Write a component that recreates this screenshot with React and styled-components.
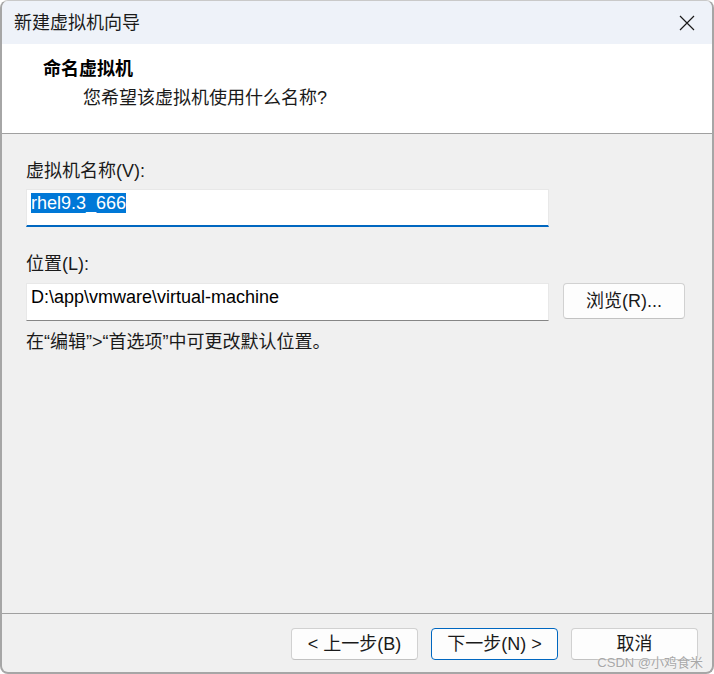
import React from 'react'
import styled, { createGlobalStyle } from 'styled-components'

const GlobalStyle = createGlobalStyle`
  html, body {
    margin: 0;
    padding: 0;
    background: #ffffff;
  }
`

const FONT = `"Liberation Sans", "Noto Sans CJK SC", sans-serif`

const Window = styled.div`
  position: relative;
  width: 714px;
  height: 674px;
  box-sizing: border-box;
  display: flex;
  flex-direction: column;
  border: 2px solid #a6a6a6;
  border-top: 1px solid #c9c9c9;
  border-radius: 8px;
  overflow: hidden;
  background: #f0f0f0;
  font-family: ${FONT};
  font-size: 18px;
  color: #1a1a1a;
`

const TitleBar = styled.div`
  height: 43px;
  flex: none;
  display: flex;
  align-items: center;
  justify-content: space-between;
  padding-left: 12px;
  background: #eef2f9;
`

const Title = styled.span`
  font-size: 18px;
  line-height: 24px;
  color: #1a1a1a;
`

const CloseButton = styled.button`
  width: 50px;
  height: 43px;
  border: none;
  background: transparent;
  display: flex;
  align-items: center;
  justify-content: center;
  padding: 0;
`

const Header = styled.div`
  height: 90px;
  flex: none;
  box-sizing: border-box;
  padding: 13px 0 0 41px;
  background: #ffffff;
  border-bottom: 1px solid #a0a0a0;
`

const Heading = styled.div`
  font-size: 18px;
  line-height: 24px;
  font-weight: 700;
  color: #000;
`

const SubHeading = styled.div`
  margin: 5px 0 0 40px;
  font-size: 18px;
  line-height: 24px;
  color: #1a1a1a;
`

const Body = styled.div`
  flex: 1;
  padding: 26px 0 0 24px;
`

const Label = styled.div`
  font-size: 18px;
  line-height: 22px;
  margin-top: ${({ $gap }) => $gap || 0}px;
  color: #1a1a1a;
`

const FieldRow = styled.div`
  display: flex;
  align-items: flex-start;
  gap: 14px;
  margin-top: ${({ $gap }) => $gap}px;
`

const Input = styled.div`
  width: 523px;
  height: 38px;
  box-sizing: border-box;
  padding: 2px 0 0 4px;
  background: #ffffff;
  border: 1px solid #e8e8e8;
  border-bottom: ${({ $focused }) => ($focused ? '2px solid #0067c0' : '1px solid #868686')};
  font-size: 18px;
  line-height: 22px;
  color: #000;
  white-space: nowrap;
`

const Selected = styled.span`
  background: #0078d7;
  color: #ffffff;
`

const Button = styled.button`
  width: ${({ $w }) => $w}px;
  height: ${({ $h }) => $h}px;
  box-sizing: border-box;
  border: 1px solid ${({ $primary }) => ($primary ? '#0067c0' : '#d1d1d1')};
  border-bottom-color: ${({ $primary }) => ($primary ? '#0067c0' : '#c2c2c2')};
  border-radius: 4px;
  background: #fdfdfd;
  font-family: ${FONT};
  font-size: 18px;
  line-height: 20px;
  color: #1a1a1a;
  padding: 0;
  display: flex;
  align-items: center;
  justify-content: center;
  white-space: pre;
`

const Hint = styled.div`
  margin-top: 10px;
  font-size: 18px;
  line-height: 22px;
  color: #1a1a1a;
`

const Footer = styled.div`
  height: 59px;
  flex: none;
  box-sizing: border-box;
  border-top: 1px solid #a0a0a0;
  padding: 14px 14px 0 0;
  display: flex;
  justify-content: flex-end;
  gap: 13px;
`

const Watermark = styled.div`
  position: absolute;
  right: 9px;
  bottom: 3px;
  font-size: 13px;
  line-height: 13px;
  color: #a8a8a8;
  text-shadow: 0 0 2px #ffffff;
  pointer-events: none;
`

const CloseIcon = () => (
  <svg width="16" height="16" viewBox="0 0 16 16">
    <path d="M1 1 L15 15 M15 1 L1 15" stroke="#1a1a1a" strokeWidth="1.2" fill="none" />
  </svg>
)

export default function App() {
  return (
    <>
      <GlobalStyle />
      <Window>
        <TitleBar>
          <Title>新建虚拟机向导</Title>
          <CloseButton>
            <CloseIcon />
          </CloseButton>
        </TitleBar>
        <Header>
          <Heading>命名虚拟机</Heading>
          <SubHeading>您希望该虚拟机使用什么名称?</SubHeading>
        </Header>
        <Body>
          <Label>虚拟机名称(V):</Label>
          <FieldRow $gap={7}>
            <Input $focused>
              <Selected>rhel9.3_666</Selected>
            </Input>
          </FieldRow>
          <Label $gap={26}>位置(L):</Label>
          <FieldRow $gap={8}>
            <Input>D:\app\vmware\virtual-machine</Input>
            <Button $w={122} $h={36}>浏览(R)...</Button>
          </FieldRow>
          <Hint>在“编辑”&gt;“首选项”中可更改默认位置。</Hint>
        </Body>
        <Footer>
          <Button $w={127} $h={32}>&lt; 上一步(B)</Button>
          <Button $w={127} $h={32} $primary>下一步(N) &gt;</Button>
          <Button $w={127} $h={32}>取消</Button>
        </Footer>
        <Watermark>CSDN @小鸡食米</Watermark>
      </Window>
    </>
  )
}
